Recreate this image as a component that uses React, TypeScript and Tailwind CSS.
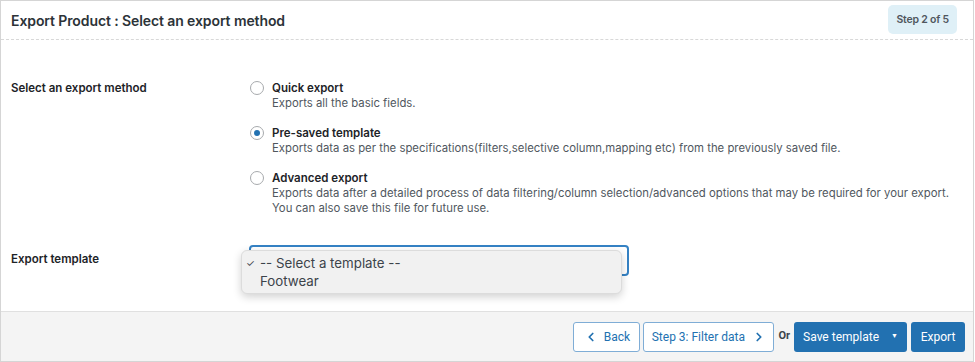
import React from "react";
import { ChevronLeft, ChevronRight } from "lucide-react";

interface ExportMethod {
  id: string;
  title: string;
  lines: string[];
}

const methods: ExportMethod[] = [
  { id: "quick", title: "Quick export", lines: ["Exports all the basic fields."] },
  {
    id: "template",
    title: "Pre-saved template",
    lines: [
      "Exports data as per the specifications(filters,selective column,mapping etc) from the previously saved file.",
    ],
  },
  {
    id: "advanced",
    title: "Advanced export",
    lines: [
      "Exports data after a detailed process of data filtering/column selection/advanced options that may be required for your export.",
      "You can also save this file for future use.",
    ],
  },
];

const Radio = ({ checked }: { checked: boolean }) => (
  <span className="mt-[1px] flex h-[14px] w-[14px] shrink-0 items-center justify-center rounded-full border border-[#a7aaad] bg-white">
    {checked && <span className="h-[6px] w-[6px] rounded-full bg-[#2271b1]" />}
  </span>
);

const App = () => {
  const selected = "template";

  return (
    <div className="h-[362px] w-[975px] bg-white font-['Inter',sans-serif] text-[#1d2327]">
      <div className="flex h-[362px] w-[974px] flex-col border border-[#d5d5d5]">
        {/* Header */}
        <div className="flex h-[39px] items-center justify-between border-b border-dashed border-[#d8d8d8] pl-[10px] pr-[16px]">
          <h1 className="text-[14px] font-semibold tracking-[-0.1px] text-[#2c3338]">
            Export Product : Select an export method
          </h1>
          <span className="mt-[-1px] rounded-[5px] bg-[#dff0f7] px-[8px] py-[7px] text-[10.5px] font-semibold tracking-[-0.2px] text-[#50575e]">
            Step 2 of 5
          </span>
        </div>

        {/* Body */}
        <div className="flex flex-1 flex-col pl-[10px] pt-[40px]">
          <div className="flex">
            <div className="w-[239px] shrink-0 text-[11.5px] font-semibold leading-[16px]">
              Select an export method
            </div>
            <div className="flex flex-col gap-[14px]">
              {methods.map((m) => (
                <label key={m.id} className="flex gap-[8px]">
                  <Radio checked={m.id === selected} />
                  <div>
                    <div className="text-[11.5px] font-semibold leading-[16px]">{m.title}</div>
                    {m.lines.map((l) => (
                      <div key={l} className="text-[11.35px] leading-[15px] text-[#50575e]">
                        {l}
                      </div>
                    ))}
                  </div>
                </label>
              ))}
            </div>
          </div>

          <div className="mt-[26px] flex items-center">
            <div className="w-[238px] shrink-0 text-[11.5px] font-semibold leading-[16px]">
              Export template
            </div>
            <div className="relative mt-[3px]">
              <div className="h-[31px] w-[380px] rounded-[4px] border-2 border-[#3582c4] bg-white" />
              {/* open native dropdown */}
              <div className="absolute left-[-8px] top-[5px] w-[381px] rounded-[6px] border border-[#dcdcdc] bg-[#f1f1f1] py-[3px] shadow-[0_3px_8px_rgba(0,0,0,0.18)]">
                <div className="flex items-center text-[13.3px] leading-[18px] text-[#3c434a]">
                  <span className="w-[18px] pl-[4px] text-[10px]">✓</span>
                  <span>-- Select a template --</span>
                </div>
                <div className="pl-[18px] text-[13.3px] leading-[18px] text-[#3c434a]">Footwear</div>
              </div>
            </div>
          </div>
        </div>

        {/* Footer */}
        <div className="flex h-[50px] items-center justify-end gap-[3px] border-t border-[#e0e0e0] bg-[#f4f4f4] pr-[8px] font-['Roboto',sans-serif] text-[12px]">
          <button className="flex h-[30px] w-[67px] items-center justify-center gap-[6px] rounded-[3px] border border-[#7fadd6] bg-white text-[#2271b1]">
            <ChevronLeft size={14} strokeWidth={3} />
            Back
          </button>
          <button className="flex h-[30px] w-[131px] items-center justify-center gap-[7px] rounded-[3px] border border-[#7fadd6] bg-white text-[#2271b1]">
            Step 3: Filter data
            <ChevronRight size={14} strokeWidth={3} />
          </button>
          <span className="px-[1px] text-[11px] font-bold text-[#3c434a]">Or</span>
          <button className="flex h-[30px] w-[113px] items-center justify-center gap-[12px] rounded-[3px] bg-[#2271b1] text-white">
            Save template
            <span className="text-[7px]">▼</span>
          </button>
          <button className="ml-[1px] flex h-[30px] w-[54px] items-center justify-center rounded-[3px] bg-[#2271b1] text-white">
            Export
          </button>
        </div>
      </div>
    </div>
  );
};

export default App;
